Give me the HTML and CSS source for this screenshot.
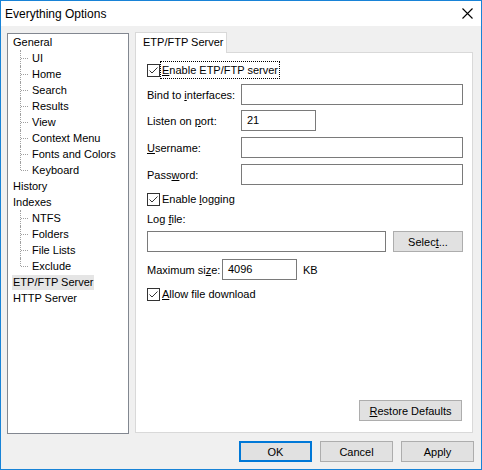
FILE: index.html
```html
<!DOCTYPE html>
<html>
<head>
<meta charset="utf-8">
<link rel="stylesheet" href="styles.css">
</head>
<body>
<div class="window">
  <div class="titlebar">
    <span class="title">Everything Options</span>
    <svg class="close" width="11" height="11" viewBox="0 0 11 11"><path d="M0.5 0.5 L10.5 10.5 M10.5 0.5 L0.5 10.5" stroke="#000" stroke-width="1.1" fill="none"/></svg>
  </div>
  <div class="client">
    <div class="main">
      <div class="tree">
        <div class="node">General</div>
        <div class="children">
          <div class="child">UI</div>
          <div class="child">Home</div>
          <div class="child">Search</div>
          <div class="child">Results</div>
          <div class="child">View</div>
          <div class="child">Context Menu</div>
          <div class="child">Fonts and Colors</div>
          <div class="child">Keyboard</div>
        </div>
        <div class="node">History</div>
        <div class="node">Indexes</div>
        <div class="children">
          <div class="child">NTFS</div>
          <div class="child">Folders</div>
          <div class="child">File Lists</div>
          <div class="child">Exclude</div>
        </div>
        <div class="node"><span class="selected">ETP/FTP Server</span></div>
        <div class="node">HTTP Server</div>
      </div>
      <div class="tabarea">
        <div class="tabstrip"><div class="tab">ETP/FTP Server</div></div>
        <div class="page">
          <div class="row check-row">
            <span class="checkbox"><svg width="13" height="13" viewBox="0 0 13 13"><path d="M2.5 6.5 L5 9 L10.5 3.5" stroke="#333" stroke-width="1" fill="none"/></svg></span>
            <span class="check-label focus"><u>E</u>nable ETP/FTP server</span>
          </div>
          <div class="row field-row gap6">
            <span class="label">Bind to <u>i</u>nterfaces:</span>
            <div class="input wide"></div>
          </div>
          <div class="row field-row gap5">
            <span class="label">Listen on <u>p</u>ort:</span>
            <div class="input short">21</div>
          </div>
          <div class="row field-row gap6">
            <span class="label"><u>U</u>sername:</span>
            <div class="input wide"></div>
          </div>
          <div class="row field-row gap6">
            <span class="label">Pass<u>w</u>ord:</span>
            <div class="input wide"></div>
          </div>
          <div class="row check-row gap6">
            <span class="checkbox"><svg width="13" height="13" viewBox="0 0 13 13"><path d="M2.5 6.5 L5 9 L10.5 3.5" stroke="#333" stroke-width="1" fill="none"/></svg></span>
            <span class="check-label">Enable <u>l</u>ogging</span>
          </div>
          <div class="row text-row gap4"><span>Log <u>f</u>ile:</span></div>
          <div class="row field-row gap4">
            <div class="input logfile"></div>
            <div class="btn select">Selec<u>t</u>...</div>
          </div>
          <div class="row field-row gap7">
            <span class="label maxlabel">Maximum si<u>z</u>e:</span>
            <div class="input short">4096</div>
            <span class="unit">KB</span>
          </div>
          <div class="row check-row gap6">
            <span class="checkbox"><svg width="13" height="13" viewBox="0 0 13 13"><path d="M2.5 6.5 L5 9 L10.5 3.5" stroke="#333" stroke-width="1" fill="none"/></svg></span>
            <span class="check-label"><u>A</u>llow file download</span>
          </div>
          <div class="restore-row">
            <div class="btn restore"><u>R</u>estore Defaults</div>
          </div>
        </div>
      </div>
    </div>
    <div class="buttons">
      <div class="btn dlg default">OK</div>
      <div class="btn dlg">Cancel</div>
      <div class="btn dlg">Apply</div>
    </div>
  </div>
</div>
</body>
</html>
```
FILE: styles.css
```css
* { box-sizing: border-box; }
body {
  margin: 0;
  font-family: "Liberation Sans", Arial, sans-serif;
  font-size: 11px;
  color: #000;
}
u { text-decoration: underline; text-underline-offset: 1px; }
.window {
  width: 482px;
  height: 470px;
  border: 1px solid #1883d7;
  background: #f0f0f0;
  display: flex;
  flex-direction: column;
}
.titlebar {
  height: 25px;
  flex: none;
  background: #fff;
  display: flex;
  align-items: center;
  justify-content: space-between;
  padding: 0 8px 0 4px;
  font-size: 12px;
}
.close { display: block; }
.client {
  flex: 1;
  padding: 6px 0 0 6px;
  display: flex;
  flex-direction: column;
}
.main {
  display: flex;
  gap: 6px;
  height: 402px;
  align-items: flex-start;
}
.tree {
  width: 122px;
  height: 401px;
  margin-top: 1px;
  border: 1px solid #828790;
  background: #fff;
  padding: 0 0 0 5px;
}
.node, .child {
  height: 16px;
  line-height: 16px;
  white-space: nowrap;
}
.child {
  position: relative;
  padding-left: 19px;
}
.child::before {
  content: "";
  position: absolute;
  left: 7px;
  top: 0;
  bottom: 0;
  border-left: 1px dotted #a0a0a0;
}
.child:last-child::before { bottom: 8px; }
.child::after {
  content: "";
  position: absolute;
  left: 8px;
  width: 7px;
  top: 8px;
  border-top: 1px dotted #a0a0a0;
}
.selected {
  display: inline-block;
  background: #e5e5e5;
  line-height: 15px;
  margin-left: -1px;
  padding: 0 1px;
}
.tabarea {
  width: 338px;
  height: 401px;
  display: flex;
  flex-direction: column;
}
.tabstrip { height: 20px; display: flex; flex: none; }
.tab {
  width: 92px;
  height: 21px;
  border: 1px solid #d9d9d9;
  border-bottom: none;
  background: #fff;
  position: relative;
  z-index: 1;
  padding-left: 7px;
  line-height: 18px;
}
.page {
  flex: 1;
  border: 1px solid #d9d9d9;
  background: #fff;
  display: flex;
  flex-direction: column;
  padding: 9px 9px 11px 11px;
}
.row { display: flex; align-items: center; flex: none; }
.gap4 { margin-top: 4px; }
.gap5 { margin-top: 5px; }
.gap6 { margin-top: 6px; }
.gap7 { margin-top: 7px; }
.check-row { height: 16px; }
.checkbox {
  width: 13px;
  height: 13px;
  border: 1px solid #333;
  background: #fff;
  display: flex;
  align-items: center;
  justify-content: center;
}
.checkbox svg { display: block; margin: -1px; flex: none; }
.check-label { margin-left: 1px; padding: 0 1px; line-height: 14px; }
.focus { outline: 1px dotted #000; outline-offset: 0; height: 16px; line-height: 16px; }
.field-row { height: 21px; }
.text-row { height: 16px; }
.label { width: 94px; flex: none; white-space: nowrap; }
.maxlabel { width: 75px; }
.input {
  height: 21px;
  border: 1px solid #7a7a7a;
  background: #fff;
  padding-left: 5px;
  line-height: 19px;
}
.wide { width: 222px; }
.short { width: 75px; }
.logfile { width: 239px; }
.unit { margin-left: 6px; }
.btn {
  height: 21px;
  border: 1px solid #adadad;
  background: #e1e1e1;
  display: flex;
  align-items: center;
  justify-content: center;
  white-space: nowrap;
}
.select { width: 70px; margin-left: auto; }
.restore-row {
  margin-top: auto;
  display: flex;
  justify-content: flex-end;
  padding-right: 1px;
}
.restore { width: 103px; }
.buttons {
  margin-top: 7px;
  display: flex;
  justify-content: flex-end;
  gap: 8px;
  padding-right: 7px;
}
.dlg { width: 73px; }
.default { border: 2px solid #0078d7; }
```
